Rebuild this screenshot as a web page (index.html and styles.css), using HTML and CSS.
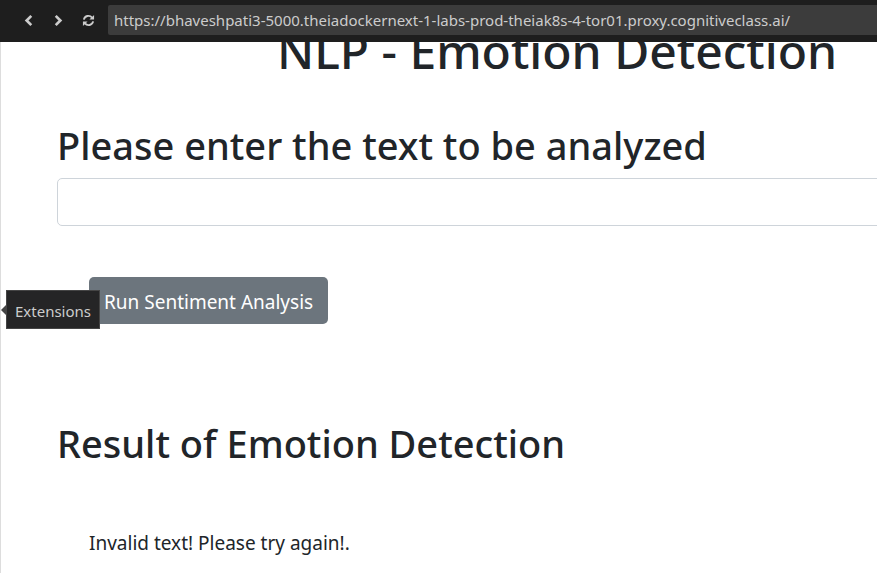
FILE: index.html
```html
<!DOCTYPE html>
<html lang="en">
<head>
<meta charset="utf-8">
<title>NLP - Emotion Detection</title>
<link rel="stylesheet" href="styles.css">
</head>
<body>
<header class="toolbar">
  <button class="nav" type="button" aria-label="Back"><svg viewBox="0 0 14 14"><path d="M10 2 L5 7 L10 12" fill="none" stroke="currentColor" stroke-width="2.9"/></svg></button>
  <button class="nav" type="button" aria-label="Forward"><svg viewBox="0 0 14 14"><path d="M4 2 L9 7 L4 12" fill="none" stroke="currentColor" stroke-width="2.9"/></svg></button>
  <button class="nav" type="button" aria-label="Reload"><svg viewBox="0 0 14 14"><path d="M2 6 A5 5 0 0 1 10.8 3.9 M12 8 A5 5 0 0 1 3.2 10.1" fill="none" stroke="currentColor" stroke-width="2"/><path d="M13 1 V6 H8 Z M1 13 V8 H6 Z" fill="currentColor"/></svg></button>
  <input class="address" type="text" aria-label="Address" value="https://bhaveshpati3-5000.theiadockernext-1-labs-prod-theiak8s-4-tor01.proxy.cognitiveclass.ai/">
</header>
<main class="viewport">
  <div class="page">
    <h1 class="title">NLP - Emotion Detection</h1>
    <h2 class="heading"><label for="text">Please enter the text to be analyzed</label></h2>
    <input class="field" id="text" type="text">
    <button class="run" type="button">Run Sentiment Analysis</button>
    <h2 class="heading">Result of Emotion Detection</h2>
    <p class="result">Invalid text! Please try again!.</p>
  </div>
</main>
<div class="tooltip" role="tooltip">Extensions</div>
</body>
</html>
```
FILE: styles.css
```css
* { box-sizing: border-box; }
body {
  margin: 0;
  height: 100vh;
  display: flex;
  flex-direction: column;
  overflow: hidden;
  position: relative;
  background: #fff;
  color: #212529;
  font-family: "Segoe UI", "Noto Sans", sans-serif;
}
.toolbar {
  flex: none;
  display: flex;
  align-items: center;
  height: 42px;
  padding: 0 0 2px 13px;
  background: #1e1e1e;
}
.nav {
  display: flex;
  justify-content: center;
  width: 30px;
  padding: 0;
  border: 0;
  background: none;
  color: #ccc;
}
.nav svg { width: 13px; height: 13px; }
.address {
  flex: 1;
  min-width: 0;
  height: 30px;
  margin-left: 5px;
  padding: 0 6px;
  border: 0;
  border-radius: 2px 0 0 2px;
  background: #3c3c3c;
  color: #ccc;
  font: 15px "Segoe UI", "Noto Sans", sans-serif;
}
.viewport {
  flex: 1;
  min-height: 0;
  overflow: hidden;
  border-left: 1px solid #ddd;
}
.page {
  display: flex;
  flex-direction: column;
  width: calc(100% + 236px);
  margin-top: -21px;
  padding: 0 56px;
}
.title {
  margin: 0;
  text-align: center;
  font-size: 48px;
  line-height: 60px;
  font-weight: 500;
}
.heading {
  margin: 40px 0 9px;
  font-size: 38px;
  line-height: 48px;
  font-weight: 500;
}
.field {
  height: 48px;
  padding: 8px 16px;
  border: 1px solid #ced4da;
  border-radius: 5px;
  font: 19px "Segoe UI", "Noto Sans", sans-serif;
}
.run {
  align-self: flex-start;
  margin: 51px 0 55px 32px;
  height: 47px;
  padding: 2px 15px 0;
  border: 0;
  border-radius: 5px;
  background: #6c757d;
  color: #fff;
  font: 19px "Segoe UI", "Noto Sans", sans-serif;
}
.result {
  margin: 52px 32px;
  font-size: 19px;
  line-height: 30px;
}
.tooltip {
  position: absolute;
  left: 6px;
  top: 290px;
  height: 39px;
  padding: 4px 8px 0;
  border: 1px solid #454545;
  background: #252526;
  color: #ccc;
  font-size: 15px;
  line-height: 32px;
}
.tooltip::before {
  content: "";
  position: absolute;
  left: -6px;
  top: 14px;
  border: 5px solid transparent;
  border-left: 0;
  border-right-color: #454545;
}
```
